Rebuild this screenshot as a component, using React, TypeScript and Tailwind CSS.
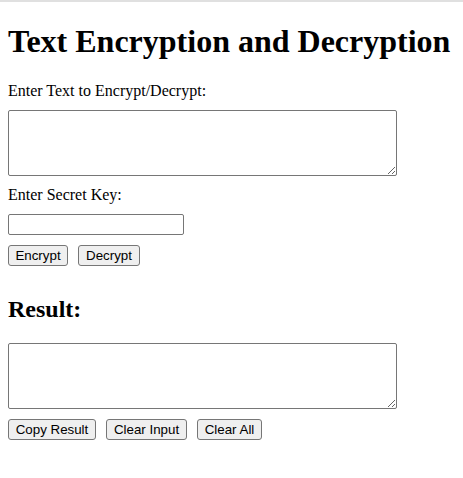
import React, { useState } from 'react';

const btn =
  "h-[21px] px-0 text-center bg-[#efefef] text-black border border-[#767676] rounded-[3px] text-[13.33px] leading-[15px] font-['Liberation_Sans',Arial,sans-serif]";

const App: React.FC = () => {
  const [text, setText] = useState('');
  const [key, setKey] = useState('');
  const [result, setResult] = useState('');

  // simple xor cipher, base64 wrapped
  const xor = (s: string, k: string) =>
    Array.from(s)
      .map((c, i) => String.fromCharCode(c.charCodeAt(0) ^ k.charCodeAt(i % k.length)))
      .join('');

  const encrypt = () => {
    if (!key) return;
    setResult(btoa(xor(text, key)));
  };

  const decrypt = () => {
    if (!key) return;
    try {
      setResult(xor(atob(text), key));
    } catch {
      setResult('');
    }
  };

  return (
    <div className="min-h-screen bg-white border-t-2 border-[#e0e0e0] px-2 text-black font-['Liberation_Serif','Times_New_Roman',serif]">
      <h1 className="mt-[20.5px] text-[32px] leading-[37px] font-bold">
        Text Encryption and Decryption
      </h1>

      <label htmlFor="inputText" className="block mt-[22px] text-base leading-[18px]">
        Enter Text to Encrypt/Decrypt:
      </label>
      <textarea
        id="inputText"
        value={text}
        onChange={(e) => setText(e.target.value)}
        className="block mt-[10.5px] w-[389px] h-[66px] border border-[#767676] rounded-[2px] bg-white"
      />

      <label htmlFor="secretKey" className="block mt-[9.5px] text-base leading-[18px]">
        Enter Secret Key:
      </label>
      <input
        id="secretKey"
        type="text"
        value={key}
        onChange={(e) => setKey(e.target.value)}
        className="block mt-[10.5px] w-[176px] h-[21px] border border-[#767676] rounded-[2px] bg-white"
      />

      <div className="flex gap-[10px] mt-[10px]">
        <button className={`${btn} w-[60px]`} onClick={encrypt}>Encrypt</button>
        <button className={`${btn} w-[62px]`} onClick={decrypt}>Decrypt</button>
      </div>

      <h2 className="mt-[29px] text-2xl leading-[28px] font-bold">Result:</h2>
      <textarea
        readOnly
        value={result}
        className="block mt-[20px] w-[389px] h-[66px] border border-[#767676] rounded-[2px] bg-white"
      />

      <div className="flex gap-[10px] mt-[10px]">
        <button
          className={`${btn} w-[88px]`}
          onClick={() => navigator.clipboard?.writeText(result)}
        >
          Copy Result
        </button>
        <button className={`${btn} w-[81px]`} onClick={() => setText('')}>
          Clear Input
        </button>
        <button
          className={`${btn} w-[65px]`}
          onClick={() => {
            setText('');
            setKey('');
            setResult('');
          }}
        >
          Clear All
        </button>
      </div>
    </div>
  );
};

export default App;
